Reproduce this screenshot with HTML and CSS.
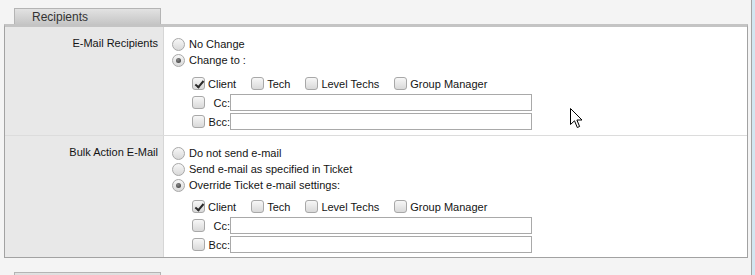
FILE: index.html
```html
<!DOCTYPE html>
<html lang="en">
<head>
    <meta charset="UTF-8">
    <title>Bulk Action - Recipients</title>
    <link rel="stylesheet" href="styles.css">
</head>
<body>
<div class="page">
    <div class="tab">Recipients</div>
    <div class="panel">
        <div class="row first">
            <div class="label">E-Mail Recipients</div>
            <div class="field">
                <label class="opt"><input type="radio" name="rcpt">No Change</label>
                <label class="opt"><input type="radio" name="rcpt" checked>Change to :</label>
                <div class="group">
                    <div class="checks">
                        <label><input type="checkbox" checked>Client</label>
                        <label><input type="checkbox">Tech</label>
                        <label><input type="checkbox">Level Techs</label>
                        <label><input type="checkbox">Group Manager</label>
                    </div>
                    <div class="addr"><input type="checkbox"><span>Cc:</span><input type="text" class="text"></div>
                    <div class="addr"><input type="checkbox"><span>Bcc:</span><input type="text" class="text"></div>
                </div>
            </div>
        </div>
        <div class="row">
            <div class="label">Bulk Action E-Mail</div>
            <div class="field">
                <label class="opt"><input type="radio" name="mail">Do not send e-mail</label>
                <label class="opt"><input type="radio" name="mail">Send e-mail as specified in Ticket</label>
                <label class="opt"><input type="radio" name="mail" checked>Override Ticket e-mail settings:</label>
                <div class="group">
                    <div class="checks">
                        <label><input type="checkbox" checked>Client</label>
                        <label><input type="checkbox">Tech</label>
                        <label><input type="checkbox">Level Techs</label>
                        <label><input type="checkbox">Group Manager</label>
                    </div>
                    <div class="addr"><input type="checkbox"><span>Cc:</span><input type="text" class="text"></div>
                    <div class="addr"><input type="checkbox"><span>Bcc:</span><input type="text" class="text"></div>
                </div>
            </div>
        </div>
    </div>
    <div class="tab next"></div>

    <!-- mouse pointer from the screenshot -->
    <svg class="cursor" width="13" height="21" viewBox="0 0 13 21">
        <path d="M0.5 0.5 L0.5 16.5 L4.5 12.8 L7.3 19.5 L9.6 18.5 L6.9 12 L12 12 Z" fill="#fff" stroke="#000" stroke-width="1" stroke-linejoin="miter"/>
    </svg>
</div>
</body>
</html>
```

FILE: styles.css
```css
html {
    background: #d3e6f1;
}
body {
    margin: 0;
    font-family: "Liberation Sans", Arial, sans-serif;
    font-size: 11px;
    color: #141414;
}
.page {
    position: relative;
    width: 752px;
    height: 275px;
    overflow: hidden;
    background: #f4f4f4;
    border-right: 1px solid #a3a3a3;
    box-sizing: border-box;
    padding-top: 8px;
}
.tab {
    width: 147px;
    height: 16px;
    margin-left: 14px;
    padding-left: 17px;
    box-sizing: border-box;
    border: 1px solid #b4b4b4;
    border-bottom: none;
    background: linear-gradient(#e2e2e2, #c6c6c6);
    font-size: 12px;
    line-height: 16px;
    color: #333;
}
.tab.next {
    margin-top: 14px;
}
.panel {
    width: 742px;
    margin-left: 4px;
    border: 1px solid #a2a2a2;
    border-top: 3px solid #c4c4c4;
    background: #fff;
}
.row {
    display: flex;
}
.row.first {
    border-bottom: 1px solid #dcdcdc;
}
.label {
    width: 159px;
    flex: none;
    background: #e8e8e8;
    border-right: 1px solid #d6d6d6;
    text-align: right;
    padding: 10px 5px 0 0;
    box-sizing: border-box;
}
.field {
    padding: 9px 0 4px 8px;
    flex: 1;
}
.first .field {
    padding-bottom: 5px;
}
.opt {
    display: flex;
    align-items: center;
    height: 16px;
}
.group {
    margin: 7px 0 0 20px;
}
.row + .row .group {
    margin-top: 5px;
}
.checks {
    display: flex;
    align-items: center;
    height: 17px;
}
.checks label {
    display: flex;
    align-items: center;
    margin-right: 15px;
}
.addr {
    display: flex;
    align-items: center;
    height: 17px;
    margin-top: 2px;
}
.addr span {
    width: 22px;
    text-align: right;
}
.text {
    width: 302px;
    height: 17px;
    margin: 0;
    padding: 0 2px;
    box-sizing: border-box;
    border: 1px solid #a9a9a9;
    font: inherit;
}

/* old style radio + checkbox look */
input[type=radio],
input[type=checkbox] {
    appearance: none;
    -webkit-appearance: none;
    width: 13px;
    height: 13px;
    margin: 0 3px 0 0;
    flex: none;
    box-sizing: border-box;
    border: 1px solid #a8a8a8;
    background: linear-gradient(#f7f7f7, #d9d9d9);
    position: relative;
}
input[type=radio] {
    border-radius: 50%;
    margin-right: 4px;
}
input[type=radio]:checked::before {
    content: "";
    position: absolute;
    left: 3px;
    top: 3px;
    width: 5px;
    height: 5px;
    border-radius: 50%;
    background: radial-gradient(circle at 40% 35%, #888, #333);
}
input[type=checkbox] {
    border-radius: 3px;
}
input[type=checkbox]:checked::before {
    content: "";
    position: absolute;
    left: 3.5px;
    top: 0.5px;
    width: 3px;
    height: 7px;
    border: solid #2a2a2a;
    border-width: 0 2px 2px 0;
    transform: rotate(40deg);
}
.cursor {
    position: absolute;
    left: 570px;
    top: 108px;
}
```
